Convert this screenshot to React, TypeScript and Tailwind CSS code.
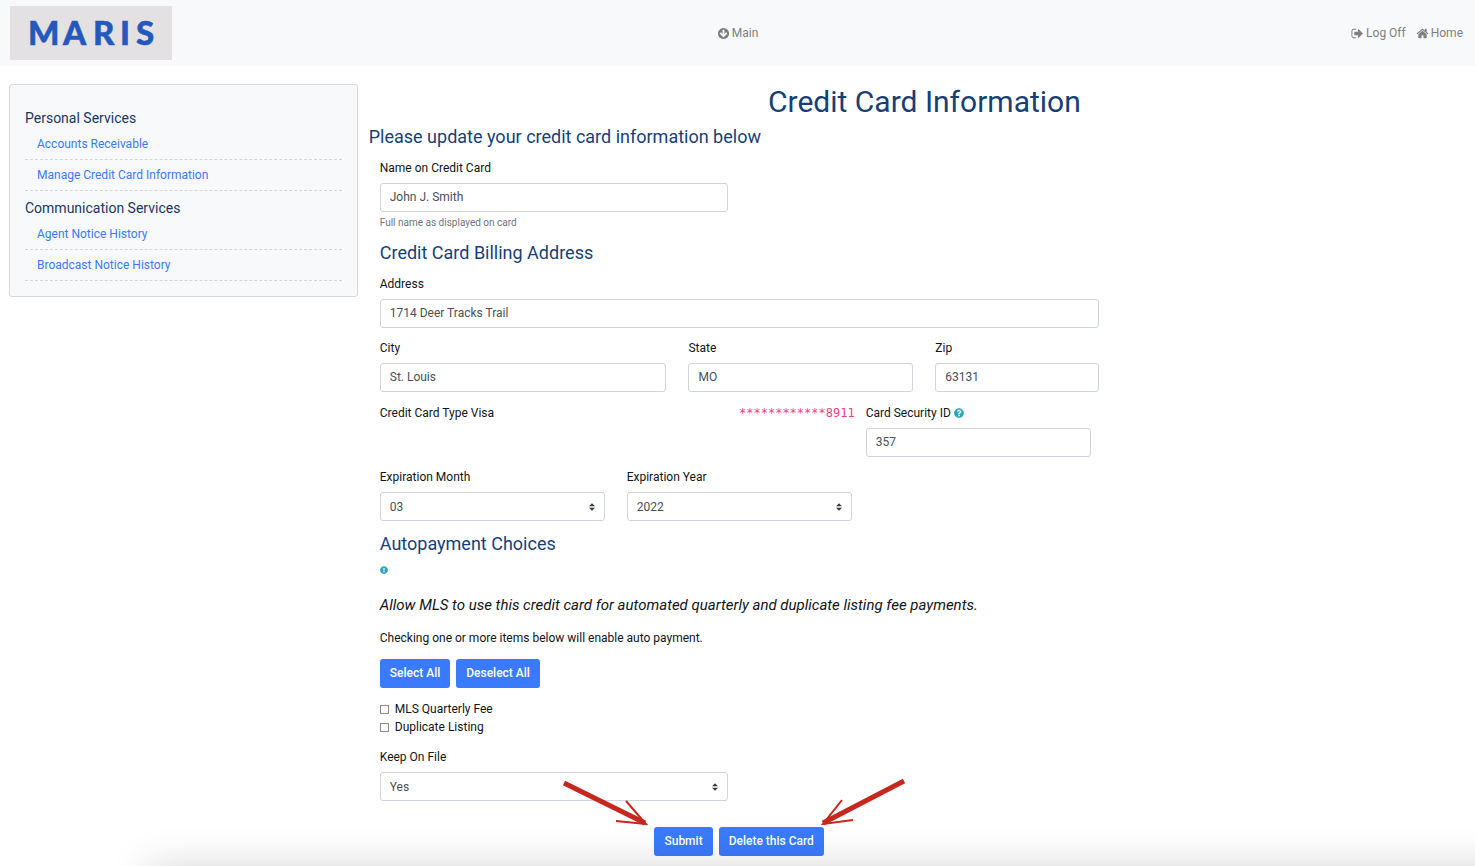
import { useState, type ReactNode } from "react";
import { FaExclamationCircle, FaQuestionCircle } from "react-icons/fa";

const ICONS = {
  arrowCircleDown:
    "M1412 897q0-27-18-45l-91-91q-18-18-45-18t-45 18l-189 189v-502q0-26-19-45t-45-19h-128q-26 0-45 19t-19 45v502l-189-189q-19-19-45-19t-45 19l-91 91q-18 18-18 45t18 45l362 362 91 91q18 18 45 18t45-18l91-91 362-362q18-18 18-45zm252-1q0 209-103 385.5t-279.5 279.5-385.5 103-385.5-103-279.5-279.5-103-385.5 103-385.5 279.5-279.5 385.5-103 385.5 103 279.5 279.5 103 385.5z",
  signOut:
    "M704 1440q0 4 1 20t.5 26.5-3 23.5-10 19.5-20.5 6.5h-320q-119 0-203.5-84.5t-84.5-203.5v-704q0-119 84.5-203.5t203.5-84.5h320q13 0 22.5 9.5t9.5 22.5q0 4 1 20t.5 26.5-3 23.5-10 19.5-20.5 6.5h-320q-66 0-113 47t-47 113v704q0 66 47 113t113 47h312l11.5 1 11.5 3 8 5.5 7 9 2 13.5zm928-544q0 26-19 45l-544 544q-19 19-45 19t-45-19-19-45v-288h-448q-26 0-45-19t-19-45v-384q0-26 19-45t45-19h448v-288q0-26 19-45t45-19 45 19l544 544q19 19 19 45z",
  home: "M1472 992v480q0 26-19 45t-45 19h-384v-384h-256v384h-384q-26 0-45-19t-19-45v-480q0-1 .5-3t.5-3l575-474 575 474q1 2 1 6zm223-69l-62 74q-8 9-21 11h-3q-13 0-21-7l-692-577-692 577q-12 8-24 7-13-2-21-11l-62-74q-8-10-7-23.5t11-21.5l719-599q32-26 76-26t76 26l244 204v-195q0-14 9-23t23-9h192q14 0 23 9t9 23v408l219 182q10 8 11 21.5t-7 23.5z",
};

const menu = [
  {
    title: "Personal Services",
    links: ["Accounts Receivable", "Manage Credit Card Information"],
  },
  {
    title: "Communication Services",
    links: ["Agent Notice History", "Broadcast Notice History"],
  },
];

const months = ["01", "02", "03", "04", "05", "06", "07", "08", "09", "10", "11", "12"];
const years = ["2021", "2022", "2023", "2024", "2025", "2026"];
const feeOptions = ["MLS Quarterly Fee", "Duplicate Listing"];

const controlClass =
  "block h-[29px] w-full appearance-none rounded-[3px] border border-[#ced4da] bg-white px-[9px] text-[#495057] focus:border-blue-400 focus:outline-none";

function NavLink({ icon, children }: { icon: string; children: ReactNode }) {
  return (
    <a href="#" className="flex items-center gap-[2px] text-[#7f7f7f]">
      <svg viewBox="0 0 1792 1792" className="size-[13px]" fill="currentColor">
        <path d={icon} />
      </svg>
      {children}
    </a>
  );
}

interface FieldProps {
  id: string;
  label: ReactNode;
  className?: string;
  children: ReactNode;
}

function Field({ id, label, className = "", children }: FieldProps) {
  return (
    <div className={`mb-[11px] px-[11px] ${className}`}>
      <label htmlFor={id} className="mb-[6px] flex items-center gap-[3px]">
        {label}
      </label>
      {children}
    </div>
  );
}

interface TextFieldProps {
  id: string;
  label: ReactNode;
  value: string;
  className?: string;
  help?: string;
}

function TextField({ id, label, value, className, help }: TextFieldProps) {
  return (
    <Field id={id} label={label} className={className}>
      <input
        id={id}
        type="text"
        defaultValue={value}
        className={`${controlClass} pb-[2px]`}
      />
      {help && (
        <small className="mt-[3px] block text-[10px] leading-[15px] text-[#6c757d]">
          {help}
        </small>
      )}
    </Field>
  );
}

interface SelectFieldProps extends TextFieldProps {
  options: string[];
}

function SelectField({ id, label, value, options, className }: SelectFieldProps) {
  return (
    <Field id={id} label={label} className={className}>
      <div className="relative">
        <select id={id} defaultValue={value} className={controlClass}>
          {options.map((option) => (
            <option key={option}>{option}</option>
          ))}
        </select>
        <svg
          viewBox="0 0 4 5"
          className="pointer-events-none absolute top-1/2 right-[10px] h-2 w-[6px] -translate-y-1/2"
          fill="#343a40"
        >
          <path d="M2 0L0 2h4zm0 5L0 3h4z" />
        </svg>
      </div>
    </Field>
  );
}

function Button({
  type = "button",
  onClick,
  children,
}: {
  type?: "button" | "submit";
  onClick?: () => void;
  children: ReactNode;
}) {
  return (
    <button
      type={type}
      onClick={onClick}
      className="h-[29px] rounded-[3px] bg-[#3a7afe] px-[10px] pb-[2px] font-medium whitespace-nowrap text-white hover:bg-blue-600"
    >
      {children}
    </button>
  );
}

function SectionTitle({ children }: { children: ReactNode }) {
  return (
    <h3 className="mx-[11px] mb-[11px] pt-px text-lg leading-[22px] text-[#173f77]">
      {children}
    </h3>
  );
}

export default function App() {
  const [checked, setChecked] = useState<string[]>([]);

  const toggle = (name: string) =>
    setChecked((prev) =>
      prev.includes(name) ? prev.filter((n) => n !== name) : [...prev, name]
    );

  return (
    <div className="relative min-h-screen overflow-hidden bg-white pb-[10px] font-['Roboto',sans-serif] text-xs leading-[18px] text-[#111418]">
      <header className="grid h-[66px] grid-cols-[1fr_auto_1fr] items-center bg-[#f8f9fb] px-[10px]">
        <a href="#" className="w-[162px] bg-[#e3e1e2]">
          <svg viewBox="0 0 162 54" className="block h-[54px] w-[162px]">
            <text
              x="18 53 83 110 126"
              y="39"
              fill="#2458bd"
              stroke="#2458bd"
              strokeWidth="0.5"
              fontFamily="Lato, sans-serif"
              fontSize="33"
              fontWeight="900"
            >
              MARIS
            </text>
          </svg>
        </a>
        <NavLink icon={ICONS.arrowCircleDown}>Main</NavLink>
        <nav className="flex justify-end gap-[10px] pr-[2px]">
          <NavLink icon={ICONS.signOut}>Log Off</NavLink>
          <NavLink icon={ICONS.home}>Home</NavLink>
        </nav>
      </header>

      <div className="flex items-start">
        <div className="w-1/4 shrink-0 pt-[18px] pr-[11px] pl-[9px]">
          <aside className="rounded-[3px] border border-[#d6d8da] bg-[#f8f9fb] px-[15px] pt-4 pb-[15px]">
            {menu.map((group) => (
              <section key={group.title}>
                <h2 className="pt-2 pb-[2px] text-sm leading-[18px] text-[#17375f]">
                  {group.title}
                </h2>
                <ul>
                  {group.links.map((link) => (
                    <li
                      key={link}
                      className="border-b border-dashed border-[#d3d5d7] px-3 py-[6px]"
                    >
                      <a href="#" className="text-[#3a7afe] hover:underline">
                        {link}
                      </a>
                    </li>
                  ))}
                </ul>
              </section>
            ))}
          </aside>
        </div>

        <main className="-mr-[5px] min-w-0 flex-1 pt-[18px]">
          <h1 className="mb-[6px] text-center text-3xl leading-[36px] text-[#173f77]">
            Credit Card Information
          </h1>
          <h2 className="mb-[11px] text-lg leading-[22px] text-[#173f77]">
            Please update your credit card information below
          </h2>

          <form className="w-2/3" onSubmit={(e) => e.preventDefault()}>
            <TextField
              id="name"
              label="Name on Credit Card"
              value="John J. Smith"
              help="Full name as displayed on card"
              className="w-1/2"
            />

            <SectionTitle>Credit Card Billing Address</SectionTitle>
            <TextField id="address" label="Address" value="1714 Deer Tracks Trail" />
            <div className="flex pb-px">
              <TextField id="city" label="City" value="St. Louis" className="w-5/12" />
              <TextField id="state" label="State" value="MO" className="w-1/3" />
              <TextField id="zip" label="Zip" value="63131" className="w-1/4" />
            </div>

            <div className="flex">
              <p className="flex flex-1 justify-between pl-[11px]">
                <span>Credit Card Type Visa</span>
                <code className="font-['DejaVu_Sans_Mono',monospace] text-[#e83e8c]">
                  ************8911
                </code>
              </p>
              <TextField
                id="cvv"
                label={
                  <>
                    Card Security ID
                    <FaQuestionCircle size={10} color="#2ba3b8" />
                  </>
                }
                value="357"
                className="mr-2 w-1/3"
              />
            </div>

            <div className="flex">
              <SelectField
                id="month"
                label="Expiration Month"
                value="03"
                options={months}
                className="w-1/3"
              />
              <SelectField
                id="year"
                label="Expiration Year"
                value="2022"
                options={years}
                className="w-1/3"
              />
            </div>

            <SectionTitle>Autopayment Choices</SectionTitle>
            <div className="px-[11px]">
              <FaExclamationCircle size={8} color="#2ba3b8" />
              <p className="mt-5 mb-[13px] text-[15px] leading-[22px] whitespace-nowrap italic">
                Allow MLS to use this credit card for automated quarterly and duplicate
                listing fee payments.
              </p>
              <p className="mb-3">
                Checking one or more items below will enable auto payment.
              </p>
              <div className="mb-3 flex gap-[6px]">
                <Button onClick={() => setChecked(feeOptions)}>Select All</Button>
                <Button onClick={() => setChecked([])}>Deselect All</Button>
              </div>
              <div className="mb-3">
                {feeOptions.map((name) => (
                  <label key={name} className="flex items-center gap-[6px]">
                    <input
                      type="checkbox"
                      checked={checked.includes(name)}
                      onChange={() => toggle(name)}
                      className="size-[9px] appearance-none border border-[#8a8a8a] bg-white checked:bg-[#3a7afe]"
                    />
                    {name}
                  </label>
                ))}
              </div>
            </div>
            <SelectField
              id="keep"
              label="Keep On File"
              value="Yes"
              options={["Yes", "No"]}
              className="w-1/2"
            />

            <div className="mt-[26px] flex justify-center">
              <div className="relative flex gap-[6px]">
                <Button type="submit">Submit</Button>
                <Button>Delete this Card</Button>
                {/* red pointers over both actions */}
                <svg
                  viewBox="0 0 350 54"
                  className="pointer-events-none absolute bottom-full -left-24 h-[54px] w-[350px] max-w-none"
                  stroke="#c4281f"
                  fill="none"
                >
                  <path d="M6 10L87 50M346 8L265 50" strokeWidth="5" />
                  <path d="M68 28L88 51L58 48M284 27L265 51L295 47" strokeWidth="2" />
                </svg>
              </div>
            </div>
          </form>
        </main>
      </div>

      {/* soft shade rising from the bottom edge */}
      <div className="pointer-events-none absolute top-full -right-16 left-[148px] h-16 shadow-[0_0_40px_rgba(0,0,0,0.16)]" />
    </div>
  );
}
